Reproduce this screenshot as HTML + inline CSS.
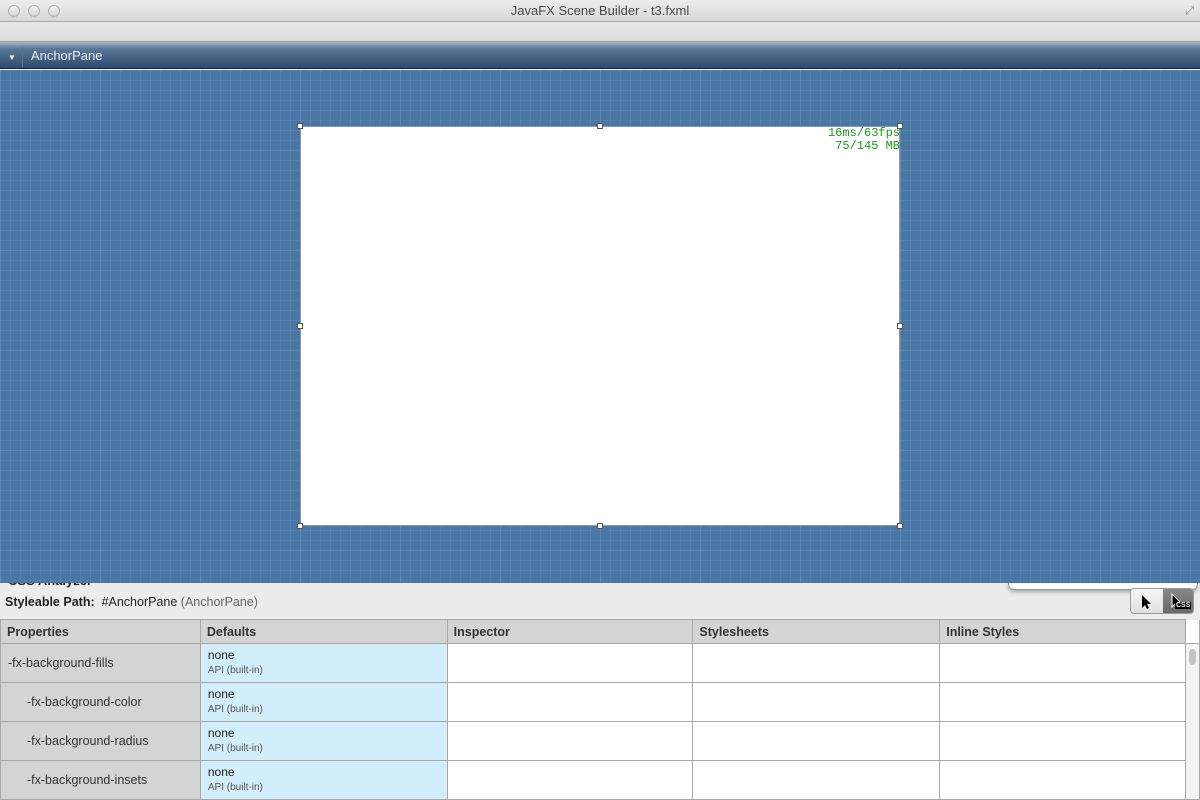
<!DOCTYPE html>
<html><head><style>
*{margin:0;padding:0;box-sizing:border-box}
body{width:1200px;height:800px;overflow:hidden;font-family:"Liberation Sans",sans-serif;background:#ececec;position:relative}
.abs{position:absolute}
#title{left:0;top:0;width:1200px;height:22px;background:linear-gradient(#ececec,#d8d8d8);border-bottom:1px solid #a8a8a8;text-align:center;font-size:13px;color:#4a4a4a;line-height:22px}
.dot{top:5px;width:12px;height:12px;border-radius:50%;border:1px solid #b0b0b0;background:linear-gradient(#f4f4f4,#d4d4d4)}
#tool{left:0;top:22px;width:1200px;height:20px;background:linear-gradient(#e8e8e8,#dcdcdc);border-bottom:1px solid #9a9a9a}
#hdr{left:0;top:42px;width:1200px;height:27px;background:linear-gradient(#a8b8c8 0%,#5a7898 25%,#2e4a6c 100%);border-bottom:1px solid #1a2a40;color:#e8eef4;font-size:13px;line-height:28px}
#blue{left:0;top:70px;width:1200px;height:513px;background-color:#4a76a6;
background-image:linear-gradient(90deg,rgba(255,255,255,.07) 1px,transparent 1px),linear-gradient(rgba(255,255,255,.07) 1px,transparent 1px),linear-gradient(90deg,rgba(255,255,255,.05) 1px,transparent 1px),linear-gradient(rgba(255,255,255,.05) 1px,transparent 1px);
background-size:100px 100px,100px 100px,10px 10px,10px 10px;background-position:0 -20px,0 -20px,0 0,0 0}
#canvas{left:300px;top:126px;width:600px;height:400px;background:#fff;border:1px solid #8a9aaa}
.h{width:6px;height:6px;background:#fff;border:1px solid #555}
#fps{right:300px;top:127px;font-family:"Liberation Mono",monospace;font-size:12px;color:#1a9a1a;text-align:right;line-height:13px}
table{position:absolute;left:0;top:619px;border-collapse:collapse;font-size:12px;color:#222}
td,th{border:1px solid #a8a8a8;vertical-align:middle}
th{height:24px;background:#d4d4d4;text-align:left;font-weight:bold;padding-left:6px;font-size:12.5px;color:#333}
td{height:39px}
td.p{background:#d4d4d4;font-size:12.5px;color:#333}
td.d{background:#d2eefb;padding-left:7px;line-height:14px}
td.d small{font-size:10px;color:#555}
td.w{background:#fff}
</style></head><body>
<div id="title" class="abs">JavaFX Scene Builder - t3.fxml</div>
<div class="abs dot" style="left:8px"></div><div class="abs dot" style="left:28px"></div><div class="abs dot" style="left:48px"></div>
<div class="abs" style="right:6px;top:5px;font-size:11px;color:#888">⤢</div>
<div id="tool" class="abs"></div>
<div id="hdr" class="abs"><span style="font-size:8px;margin-left:8px">▼</span><span style="display:inline-block;width:1px;height:20px;background:#5a7090;vertical-align:middle;margin:0 8px 0 6px"></span>AnchorPane</div>
<div id="blue" class="abs"></div>
<div id="canvas" class="abs"></div>
<div class="abs h" style="left:297px;top:123px"></div><div class="abs h" style="left:597px;top:123px"></div><div class="abs h" style="left:897px;top:123px"></div>
<div class="abs h" style="left:297px;top:323px"></div><div class="abs h" style="left:897px;top:323px"></div>
<div class="abs h" style="left:297px;top:523px"></div><div class="abs h" style="left:597px;top:523px"></div><div class="abs h" style="left:897px;top:523px"></div>
<div id="fps" class="abs">16ms/63fps<br>75/145 MB</div>
<div class="abs" style="left:8px;top:583px;font-size:13px;font-weight:bold;color:#222;height:7px;overflow:hidden;line-height:7px"><div style="margin-top:-6px">CSS Analyzer</div></div>
<div class="abs" style="left:5px;top:595px;font-size:12.5px;color:#222"><b>Styleable Path:</b>&nbsp; #AnchorPane <span style="color:#666">(AnchorPane)</span></div>
<div class="abs" style="left:1008px;top:583px;width:190px;height:7px;background:#fff;border:1px solid #999;border-top:none;border-radius:0 0 6px 6px;box-shadow:0 2px 4px rgba(0,0,0,.3)"></div>
<div class="abs" style="left:1130px;top:588px;width:64px;height:26px;border:1px solid #999;border-radius:4px;background:linear-gradient(#f8f8f8,#e0e0e0);overflow:hidden">
<div class="abs" style="left:32px;top:0;width:32px;height:26px;background:linear-gradient(#888,#666)"></div>
<svg class="abs" style="left:10px;top:5px" width="12" height="16"><path d="M1 1L1 14L4 11L6 15L8 14L6 10L10 10Z" fill="#000"/></svg>
<svg class="abs" style="left:40px;top:4px" width="12" height="16"><path d="M1 1L1 14L4 11L6 15L8 14L6 10L10 10Z" fill="#000" stroke="#fff" stroke-width="1"/></svg>
<div class="abs" style="left:44px;top:13px;font-size:7px;background:#000;color:#fff;padding:0 1px;font-weight:bold">CSS</div>
</div>
<table>
<tr><th style="width:200px">Properties</th><th style="width:247px">Defaults</th><th style="width:246px">Inspector</th><th style="width:247px">Stylesheets</th><th style="width:246px">Inline Styles</th><th style="width:14px;background:#fff;border-top:none"></th></tr>
<tr><td class="p" style="padding-left:7px">-fx-background-fills</td><td class="d">none<br><small>API (built-in)</small></td><td class="w"></td><td class="w"></td><td class="w"></td><td class="w" rowspan="4" style="vertical-align:top;background:#f4f4f4"><div style="width:7px;height:16px;background:#c4c4c4;border-radius:4px;margin:5px 0 0 3px"></div></td></tr>
<tr><td class="p" style="padding-left:26px">-fx-background-color</td><td class="d">none<br><small>API (built-in)</small></td><td class="w"></td><td class="w"></td><td class="w"></td></tr>
<tr><td class="p" style="padding-left:26px">-fx-background-radius</td><td class="d">none<br><small>API (built-in)</small></td><td class="w"></td><td class="w"></td><td class="w"></td></tr>
<tr><td class="p" style="padding-left:26px">-fx-background-insets</td><td class="d">none<br><small>API (built-in)</small></td><td class="w"></td><td class="w"></td><td class="w"></td></tr>
</table>
</body></html>
